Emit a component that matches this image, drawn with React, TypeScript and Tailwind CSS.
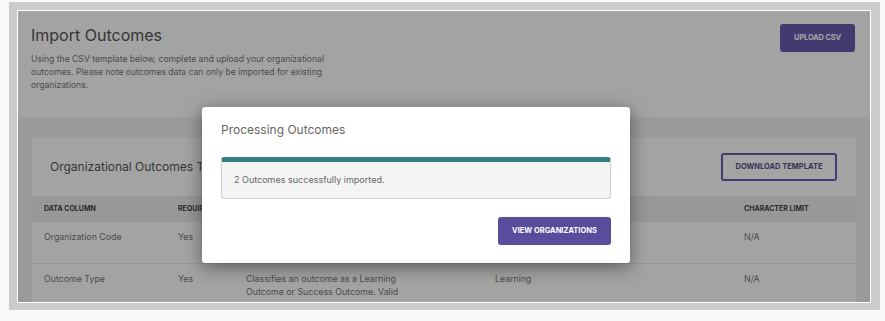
import React from 'react';

type Row = {
  column: string;
  required: string;
  description: string[];
  example: string;
  limit: string;
};

// first row's description and example sit behind the dialog
const rows: Row[] = [
  { column: 'Organization Code', required: 'Yes', description: [], example: '', limit: 'N/A' },
  {
    column: 'Outcome Type',
    required: 'Yes',
    description: ['Classifies an outcome as a Learning', 'Outcome or Success Outcome. Valid'],
    example: 'Learning',
    limit: 'N/A'
  }
];

const cols = 'grid grid-cols-[134px_68px_249px_249px_1fr] px-[12px]';

const Page = () => (
  <div className="flex h-full flex-col">
    {/* Header */}
    <div className="flex h-[106px] shrink-0 justify-between bg-white pl-[13px] pr-[15px]">
      <div>
        <h1 className="pt-[14px] text-[16px] leading-[20px] text-[#555]">Import Outcomes</h1>
        <p className="mt-[8px] w-[318px] text-[8.6px] leading-[13px] text-[#777]">
          Using the CSV template below, complete and upload your organizational outcomes. Please
          note outcomes data can only be imported for existing organizations.
        </p>
      </div>
      <button className="mt-[13px] h-[28px] w-[75px] rounded-[3px] bg-[#6a5cb0] text-[7.5px] font-bold tracking-tight text-white">
        UPLOAD CSV
      </button>
    </div>

    {/* Template section */}
    <div className="flex-1 bg-[#f3f3f3] px-[14px] pt-[21px]">
      <div className="bg-white">
        <div className="flex h-[58px] items-center justify-between pl-[18px] pr-[19px]">
          <h2 className="text-[12px] text-[#555]">Organizational Outcomes Template</h2>
          <button className="h-[28px] w-[116px] rounded-[3px] border-2 border-[#6a5cb0] text-[7.5px] font-bold text-[#5a4f8f]">
            DOWNLOAD TEMPLATE
          </button>
        </div>
        <div className={`${cols} h-[26px] items-center bg-[#eeeeee] text-[7px] font-bold text-[#444]`}>
          <span>DATA COLUMN</span>
          <span>REQUIRED</span>
          <span>DESCRIPTION</span>
          <span>EXAMPLE</span>
          <span>CHARACTER LIMIT</span>
        </div>
        {rows.map(r => (
          <div
            key={r.column}
            className={`${cols} min-h-[42px] border-b border-[#ececec] pt-[8px] pb-[7px] text-[8.8px] leading-[13px] text-[#777]`}
          >
            <span>{r.column}</span>
            <span>{r.required}</span>
            <span>
              {r.description.map(line => (
                <span key={line} className="block">
                  {line}
                </span>
              ))}
            </span>
            <span>{r.example}</span>
            <span>{r.limit}</span>
          </div>
        ))}
      </div>
    </div>
  </div>
);

const Modal = () => (
  <div className="absolute left-[184px] top-[96px] h-[156px] w-[428px] rounded-[3px] bg-white px-[19px] pt-[15px] shadow-[0_4px_18px_rgba(0,0,0,0.45)]">
    <h3 className="text-[12px] leading-[16px] text-[#666]">Processing Outcomes</h3>
    <div className="mt-[19px] flex h-[42px] items-center rounded-[3px] border border-t-[5px] border-[#cfcfcf] border-t-[#367d85] bg-[#f4f4f4] px-[12px] text-[9px] text-[#666]">
      2 Outcomes successfully imported.
    </div>
    <div className="mt-[18px] flex justify-end">
      <button className="h-[28px] w-[113px] rounded-[3px] bg-[#5a4c9c] text-[7.5px] font-bold text-white">
        VIEW ORGANIZATIONS
      </button>
    </div>
  </div>
);

export default function App() {
  return (
    <div className="h-[321px] w-[885px] bg-[#f8f8f8] pl-[9px] pt-[2px] font-['Inter',sans-serif]">
      <div className="h-[308px] w-[871px] bg-[#cbcbcb] pl-[8px] pt-[8px]">
        <div className="relative h-[293px] w-[854px] overflow-hidden border border-white">
          <Page />
          <div className="absolute inset-0 bg-black/[0.36]" />
          <Modal />
        </div>
      </div>
    </div>
  );
}
